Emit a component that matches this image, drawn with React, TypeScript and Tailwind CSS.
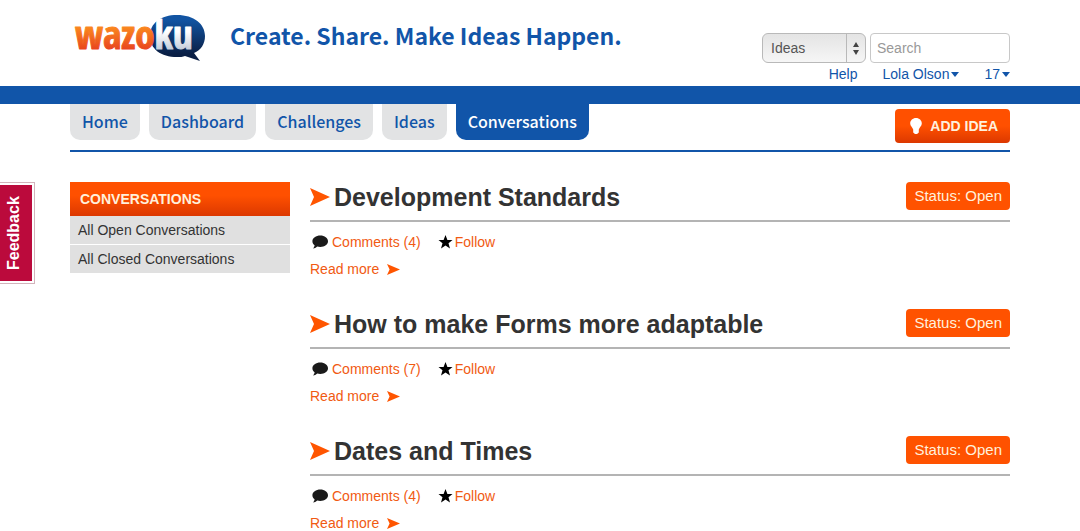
import { useState } from 'react';

interface Conversation {
  title: string;
  comments: number;
  status: string;
}

const navItems = ['Home', 'Dashboard', 'Challenges', 'Ideas', 'Conversations'];

const sidebarLinks = ['All Open Conversations', 'All Closed Conversations'];

const conversations: Conversation[] = [
  { title: 'Development Standards', comments: 4, status: 'Open' },
  { title: 'How to make Forms more adaptable', comments: 7, status: 'Open' },
  { title: 'Dates and Times', comments: 4, status: 'Open' },
];

const Logo = () => (
  <svg width="134" height="72" viewBox="0 -14 134 72" role="img" aria-label="wazoku">
    <defs>
      <linearGradient id="logo-orange" gradientUnits="userSpaceOnUse" x1="0" y1="12" x2="0" y2="36">
        <stop offset="0" stopColor="#fb8b1e" />
        <stop offset="1" stopColor="#e8431f" />
      </linearGradient>
      <linearGradient id="logo-bubble" x1="0" y1="0" x2="0" y2="1">
        <stop offset="0.1" stopColor="#1254a2" />
        <stop offset="0.85" stopColor="#0a1f45" />
      </linearGradient>
      <linearGradient id="logo-white" gradientUnits="userSpaceOnUse" x1="0" y1="6" x2="0" y2="36">
        <stop offset="0.4" stopColor="#ffffff" />
        <stop offset="1" stopColor="#c3ccd9" />
      </linearGradient>
    </defs>
    <path
      d="M104 1C121 1 132 10 132 22C132 30 128 36 121 39L127 47L112 42C110 43 107 43 104 43C88 43 77 35 77 22C77 9 88 1 104 1Z"
      fill="url(#logo-bubble)"
    />
    <text
      x="2"
      y="35"
      fontFamily="'Open Sans Condensed', 'Noto Sans Condensed', 'Roboto Condensed', 'Noto Sans CJK SC', sans-serif"
      fontWeight="900"
      fontSize="39"
      strokeWidth="1"
      strokeLinejoin="round"
    >
      <tspan fill="url(#logo-orange)" stroke="url(#logo-orange)">wazo</tspan>
      <tspan fill="url(#logo-white)" stroke="url(#logo-white)">ku</tspan>
    </text>
  </svg>
);

const Arrow = ({ className }: { className: string }) => (
  <svg className={className} viewBox="0 0 20 18" preserveAspectRatio="none" fill="#ff5500" aria-hidden="true">
    <path d="M0 0L20 9L0 18L4 9Z" />
  </svg>
);

const Caret = () => (
  <svg className="w-2 h-[5px]" viewBox="0 0 8 5" fill="#1155a9" aria-hidden="true">
    <path d="M0 0H8L4 5Z" />
  </svg>
);

const ConversationItem = ({ title, comments, status }: Conversation) => (
  <article>
    <div className="flex items-start justify-between border-b-2 border-[#b4b4b4] h-10">
      <h2 className="flex items-center gap-1 text-[25px] leading-[30px] font-bold text-[#333333]">
        <Arrow className="w-5 h-[18px]" />
        {title}
      </h2>
      <span className="shrink-0 h-7 px-2 rounded bg-[#ff5200] text-[#fff0dc] text-[15px] leading-7">
        Status: {status}
      </span>
    </div>
    <div className="flex items-center mt-2.5 leading-5">
      <a href="#comments" className="flex items-center gap-1 pl-0.5">
        <svg className="w-4 h-[14px]" viewBox="0 0 16 14" fill="#1a1a1a" aria-hidden="true">
          <path d="M8.3 0.5C12.6 0.5 16 3 16 6.3C16 9.6 12.6 12 8.3 12C7.2 12 6.2 11.9 5.3 11.6C4 12.8 2.5 13.6 1 13.6C1.9 12.6 2.5 11.4 2.6 10.3C1.2 9.3 0.4 7.9 0.4 6.3C0.4 3 4 0.5 8.3 0.5Z" />
        </svg>
        Comments ({comments})
      </a>
      <a href="#follow" className="flex items-center gap-0.5 ml-[17px]">
        <svg className="w-[15px] h-[14px]" viewBox="0 0 15 14" fill="#000000" aria-hidden="true">
          <path d="M7.5 0L9.4 5H14.5L10.5 8.3L12 13.5L7.5 10.5L3 13.5L4.5 8.3L0.5 5H5.6Z" />
        </svg>
        Follow
      </a>
    </div>
    <a href="#more" className="flex w-fit items-center gap-2 mt-[7px] leading-5">
      Read more
      <Arrow className="w-[13px] h-[11px]" />
    </a>
  </article>
);

const App = () => {
  const [scope, setScope] = useState('Ideas');
  const [query, setQuery] = useState('');

  return (
    <div className="relative bg-white font-['Liberation_Sans',Arial,sans-serif] text-[14px] text-[#f15a12]">
      <header className="h-[86px] px-5">
        <div className="max-w-[940px] mx-auto flex items-start justify-between">
          <div className="flex items-start pl-[3px]">
            <a href="#home">
              <Logo />
            </a>
            <p className="ml-[23px] mt-[17px] text-[23px] leading-9 font-bold text-[#1155a9] font-['Noto_Sans_CJK_SC',sans-serif]">
              Create. Share. Make Ideas Happen.
            </p>
          </div>

          <div className="pt-[33px]">
            <form className="flex gap-1" onSubmit={(e) => e.preventDefault()}>
              <div className="relative">
                <select
                  aria-label="Search in"
                  value={scope}
                  onChange={(e) => setScope(e.target.value)}
                  className="appearance-none block w-[104px] h-[30px] pl-2 rounded-md border border-[#b9b9b9] bg-linear-to-b from-[#e4e4e4] to-[#f6f6f6] text-[14px] text-[#555555]"
                >
                  <option>Ideas</option>
                  <option>Challenges</option>
                </select>
                <svg className="absolute right-0 top-0 w-5 h-[30px] pointer-events-none" viewBox="0 0 20 30" fill="#444444" aria-hidden="true">
                  <path d="M0 1H1V29H0Z" fill="#b9b9b9" />
                  <path d="M7 14L10 9L13 14ZM7 17H13L10 22Z" />
                </svg>
              </div>
              <input
                type="text"
                aria-label="Search"
                placeholder="Search"
                value={query}
                onChange={(e) => setQuery(e.target.value)}
                className="w-[140px] h-[30px] px-1.5 rounded border border-[#c8c8c8] text-[14px] text-[#555555] placeholder:text-[#999999]"
              />
            </form>
            <div className="flex justify-end gap-[25px] mt-px leading-5 text-[#1155a9]">
              <a href="#help">Help</a>
              <button type="button" className="flex items-center gap-0.5">
                Lola Olson
                <Caret />
              </button>
              <button type="button" className="flex items-center gap-0.5">
                17
                <Caret />
              </button>
            </div>
          </div>
        </div>
      </header>

      <div className="h-[18px] bg-[#1155a9]" />

      <div className="px-5">
        <div className="max-w-[940px] mx-auto">
          {/* Main navigation */}
          <div className="flex items-start justify-between h-12 border-b-2 border-[#1155a9]">
            <nav className="flex gap-[9px] font-['Noto_Sans_CJK_SC',sans-serif] font-medium text-[16px] leading-[34px]">
              {navItems.map((item) => (
                <a
                  key={item}
                  href={`#${item.toLowerCase()}`}
                  className={`h-9 px-3 rounded-b-[10px] ${
                    item === 'Conversations' ? 'bg-[#1155a9] text-white' : 'bg-[#e2e3e4] text-[#1155a9]'
                  }`}
                >
                  {item}
                </a>
              ))}
            </nav>
            <button
              type="button"
              className="flex items-center gap-2 h-[34px] mt-[5px] pr-3 pl-[15px] rounded bg-linear-to-b from-[#ff5000] from-50% to-[#dc3800] text-[14px] font-bold text-[#fff0dc]"
            >
              <svg className="w-3 h-4" viewBox="0 0 12 16" fill="#ffffff" aria-hidden="true">
                <path d="M6 0C9.3 0 11.8 2.4 11.8 5.5C11.8 8 9.5 9.3 8.8 11.5V14.5L7 16H5L3.2 14.5V11.5C2.5 9.3 0.2 8 0.2 5.5C0.2 2.4 2.7 0 6 0Z" />
              </svg>
              ADD IDEA
            </button>
          </div>

          <div className="flex items-start gap-5 mt-[30px]">
            <aside className="w-[220px] shrink-0">
              <h3 className="px-2.5 leading-[34px] font-bold text-[#fff0dc] bg-linear-to-b from-[#ff5000] from-40% to-[#dc3800]">
                CONVERSATIONS
              </h3>
              <ul className="flex flex-col gap-px text-[#333333]">
                {sidebarLinks.map((link) => (
                  <li key={link}>
                    <a href="#list" className="block px-2 leading-7 bg-[#e0e0e0]">
                      {link}
                    </a>
                  </li>
                ))}
              </ul>
            </aside>

            <main className="flex flex-col flex-1 gap-[30px] min-w-0">
              {conversations.map((conversation) => (
                <ConversationItem key={conversation.title} {...conversation} />
              ))}
            </main>
          </div>
        </div>
      </div>

      {/* Feedback tab on the window edge */}
      <button
        type="button"
        className="fixed left-0 top-[182px] w-[35px] h-[102px] pr-0.5 py-0.5 border border-l-0 border-[#d3b3bb] bg-white"
      >
        <span className="flex items-center justify-center w-full h-full pl-1 bg-[#bb0a3c] text-white text-[16px] font-bold [writing-mode:vertical-rl] rotate-180">
          Feedback
        </span>
      </button>
    </div>
  );
};

export default App;
